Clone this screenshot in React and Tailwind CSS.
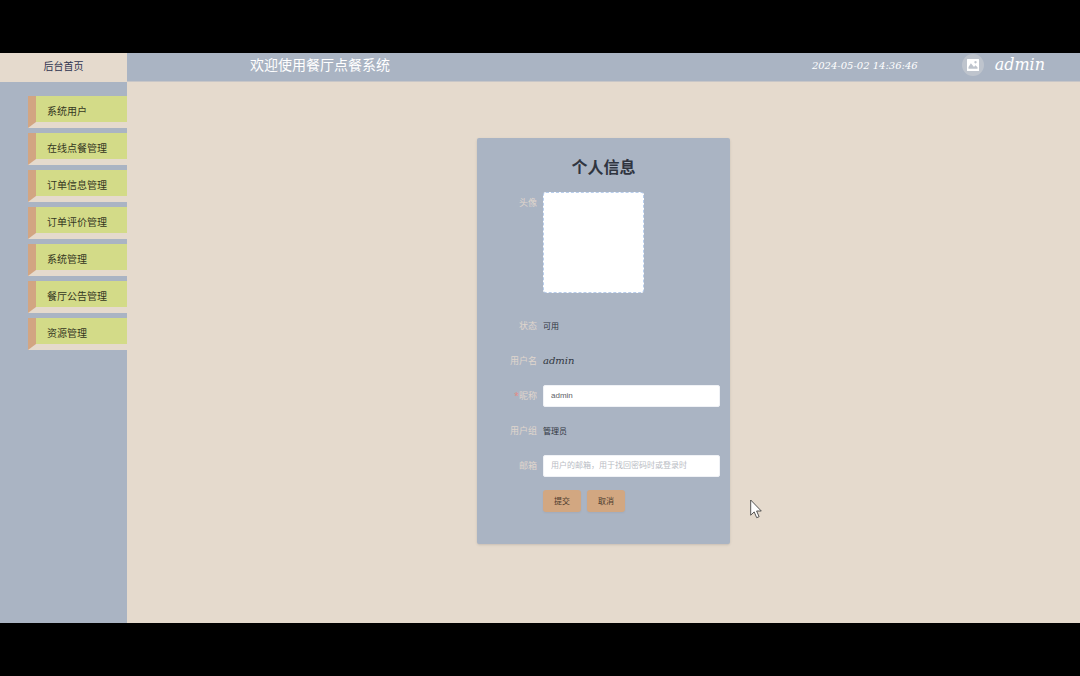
import React from "react";

const menu = [
  "系统用户",
  "在线点餐管理",
  "订单信息管理",
  "订单评价管理",
  "系统管理",
  "餐厅公告管理",
  "资源管理",
];

const script = "font-['Lucida_Handwriting','DejaVu_Serif',serif] italic";

function PictureIcon() {
  return (
    <svg viewBox="0 0 14 14" className="size-[14px]" aria-hidden="true">
      <path
        fillRule="evenodd"
        fill="#fff"
        d="M1.500 1h11a.5.5 0 0 1 .5.5v11a.5.5 0 0 1-.5.5h-11a.5.5 0 0 1-.5-.5v-11a.5.500 0 0 1 .5-.5z M2.500 10.800h9V9.300L9.400 7.300 8 9 4.900 5.300 2.500 9z M9.500 3a1.200 1.200 0 1 0 .01 0z"
      />
    </svg>
  );
}

function Pointer() {
  return (
    <svg
      viewBox="0 0 12 20"
      className="pointer-events-none absolute left-[750px] top-[499px] h-5 w-3"
      aria-hidden="true"
    >
      <path
        d="M.7 1v15.200l3.500-3.300 2.500 5.800 2.400-1-2.500-5.700h4.700z"
        fill="#fff"
        stroke="#444"
        strokeWidth="0.9"
      />
    </svg>
  );
}

function Row({ label, htmlFor, required, children }) {
  const Tag = htmlFor ? "label" : "span";
  return (
    <div className="flex">
      <Tag
        htmlFor={htmlFor}
        className="w-14 shrink-0 pr-1.5 text-right text-[9px] leading-[22px] text-[#e0d6cd]"
      >
        {required && <span className="text-[#e58a83]">*</span>}
        {label}
      </Tag>
      <div className="min-w-0 flex-1 text-[8px] leading-[22px] text-[#303540]">{children}</div>
    </div>
  );
}

const inputStyle =
  "block h-[22px] w-full rounded-xs border border-[#f0f2f6] bg-white px-[7px] font-['Liberation_Sans','Noto_Sans_CJK_SC',sans-serif] text-[8px] text-[#606266] outline-none placeholder:text-[#b9bcc4]";
const buttonStyle =
  "h-[22px] w-[38px] rounded-[3px] bg-[#d2a781] text-[8px] text-[#4b3a2c] shadow-xs";

export default function App() {
  return (
    <div className="relative flex min-h-screen flex-col bg-black py-[53px] font-['Noto_Sans','Noto_Sans_CJK_SC',sans-serif]">
      <div className="flex flex-1 bg-[#e5dacd]">
        <aside className="w-[127px] shrink-0 bg-[#aab4c3]">
          <a
            href="#home"
            className="flex h-[29px] items-center justify-center bg-[#e5dacd] pb-[3px] text-[10px] text-[#303450]"
          >
            后台首页
          </a>
          <nav className="mt-3.5 flex flex-col gap-[5px] pl-7">
            {menu.map((item) => (
              <a
                key={item}
                href="#menu"
                className="flex h-8 items-center border-b-[6px] border-l-8 border-b-[#e5dacd] border-l-[#d2a582] bg-[#d3db88] pl-[11px] pt-1 text-[10px] text-[#35371f]"
              >
                {item}
              </a>
            ))}
          </nav>
        </aside>

        <div className="flex min-w-0 flex-1 flex-col">
          <header className="flex h-[29px] items-center border-b border-[#c8c6c7] bg-[#aab4c3] pb-1 pl-[123px] pr-[35px] text-white">
            <div className="flex-1 text-sm">欢迎使用餐厅点餐系统</div>
            <time className={`${script} mr-11 text-[10px]`}>2024-05-02 14:36:46</time>
            <span className="mr-[11px] flex size-[22px] items-center justify-center rounded-full bg-[#bec4cd]">
              <PictureIcon />
            </span>
            <span className={`${script} text-base leading-5`}>admin</span>
          </header>

          <main className="flex justify-center pt-14">
            <form
              className="w-[253px] rounded-xs bg-[#aab4c3] px-2.5 pb-8 pt-[17px] shadow"
              onSubmit={(e) => e.preventDefault()}
            >
              <h1 className="mb-[13px] text-center text-base font-bold leading-6 text-[#303540]">
                个人信息
              </h1>
              <div className="flex flex-col gap-[13px]">
                <Row label="头像">
                  <div className="pb-[9px]">
                    <button
                      type="button"
                      aria-label="头像"
                      className="block size-[101px] rounded-[3px] border border-dashed border-[#b7cdec] bg-white"
                    />
                  </div>
                </Row>
                <Row label="状态">可用</Row>
                <Row label="用户名">
                  <span className={`${script} text-[10px]`}>admin</span>
                </Row>
                <Row label="昵称" htmlFor="nickname" required>
                  <input id="nickname" type="text" defaultValue="admin" className={inputStyle} />
                </Row>
                <Row label="用户组">管理员</Row>
                <Row label="邮箱" htmlFor="email">
                  <input
                    id="email"
                    type="email"
                    placeholder="用户的邮箱，用于找回密码时或登录时"
                    className={inputStyle}
                  />
                </Row>
                <div className="flex gap-1.5 pl-14">
                  <button type="submit" className={buttonStyle}>提交</button>
                  <button type="button" className={buttonStyle}>取消</button>
                </div>
              </div>
            </form>
          </main>
        </div>
      </div>
      <Pointer />
    </div>
  );
}
